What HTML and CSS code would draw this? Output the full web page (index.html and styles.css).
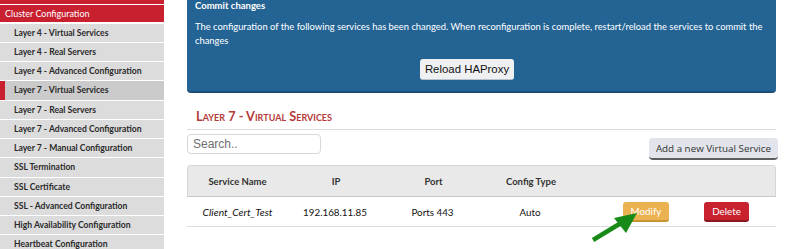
FILE: index.html
```html
<!DOCTYPE html>
<html>
<head>
<meta charset="utf-8">
<link rel="stylesheet" href="styles.css">
</head>
<body>
<div class="page">
  <nav class="sidebar">
    <div class="side-top"></div>
    <div class="side-head">Cluster Configuration</div>
    <div class="side-item">Layer 4 - Virtual Services</div>
    <div class="side-item">Layer 4 - Real Servers</div>
    <div class="side-item">Layer 4 - Advanced Configuration</div>
    <div class="side-item active">Layer 7 - Virtual Services</div>
    <div class="side-item">Layer 7 - Real Servers</div>
    <div class="side-item">Layer 7 - Advanced Configuration</div>
    <div class="side-item">Layer 7 - Manual Configuration</div>
    <div class="side-item">SSL Termination</div>
    <div class="side-item">SSL Certificate</div>
    <div class="side-item">SSL - Advanced Configuration</div>
    <div class="side-item">High Availability Configuration</div>
    <div class="side-item">Heartbeat Configuration</div>
  </nav>
  <main class="main">
    <section class="commit">
      <div class="commit-title">Commit changes</div>
      <p class="commit-text">The configuration of the following services has been changed. When reconfiguration is complete, restart/reload the services to commit the changes</p>
      <div class="commit-actions"><button class="btn-reload">Reload HAProxy</button></div>
    </section>
    <h2 class="section-title">Layer 7 - Virtual Services</h2>
    <div class="toolbar">
      <input class="search" type="text" placeholder="Search..">
      <button class="btn-add">Add a new Virtual Service</button>
    </div>
    <div class="table">
      <div class="row head">
        <div class="cell">Service Name</div>
        <div class="cell">IP</div>
        <div class="cell">Port</div>
        <div class="cell">Config Type</div>
        <div class="cell"></div>
      </div>
      <div class="row body">
        <div class="cell name">Client_Cert_Test</div>
        <div class="cell">192.168.11.85</div>
        <div class="cell">Ports 443</div>
        <div class="cell">Auto</div>
        <div class="cell actions">
          <button class="btn-modify">Modify</button>
          <button class="btn-delete">Delete</button>
        </div>
      </div>
      <svg class="arrow" width="50" height="34" viewBox="0 0 50 34">
        <line x1="2" y1="31" x2="30" y2="14" stroke="#178a17" stroke-width="4.5" stroke-linecap="butt"/>
        <polygon points="46,4 23,9 35,24" fill="#178a17"/>
      </svg>
    </div>
  </main>
</div>
</body>
</html>
```

FILE: styles.css
```css
* { box-sizing: border-box; }
html, body { margin: 0; padding: 0; background: #fff; }
body { font-family: Lato, "Open Sans", sans-serif; color: #222; width: 788px; height: 249px; overflow: hidden; }

.page { display: flex; gap: 23px; align-items: flex-start; }

.sidebar { width: 164px; flex: none; display: flex; flex-direction: column; }
.side-top { height: 3.5px; background: #c8202f; margin-bottom: 1.5px; }
.side-head { height: 17px; background: #c8202f; color: #fff; font-size: 9px; line-height: 17px; padding-left: 5px; margin-bottom: 1.5px; }
.side-item { height: 18.27px; margin-bottom: 1px; background: #dcdcdc; color: #2a2a2a; font-size: 8.6px; font-weight: 700; line-height: 18.27px; padding-left: 14px; white-space: nowrap; }
.side-item.active { background: #cbcbcb; border-left: 5px solid #c8202f; padding-left: 9px; }

.main { width: 589px; flex: none; display: flex; flex-direction: column; position: relative; }

.commit { background: #246494; color: #fff; border-radius: 0 0 4px 4px; border-bottom: 2.5px solid #1b4b79; height: 93px; padding: 0 8px; }
.commit-title { font-size: 9.5px; font-weight: 700; margin-top: 0; line-height: 12px; }
.commit-text { font-size: 9.4px; line-height: 14px; margin: 8px 0 0; }
.commit-actions { display: flex; justify-content: flex-start; margin-top: 11px; padding-left: 225px; }
.btn-reload { font-family: "Liberation Sans", Arial, sans-serif; font-size: 11.4px; color: #111; background: #eef0f2; border: 0; border-bottom: 1px solid #b7c2cc; border-radius: 3px; height: 21px; width: 94px; padding: 0; }

.section-title { font-size: 12.8px; font-variant: small-caps; color: #b53a3a; font-weight: 700; margin: 15px 0 0; padding: 0 0 5px 9px; border-bottom: 1px solid #dcdcdc; line-height: 16px; }

.toolbar { display: flex; justify-content: space-between; align-items: flex-start; margin-top: 4px; margin-right: -2px; }
.search { width: 134px; height: 20px; border: 1px solid #d8d8d8; border-radius: 4px; font-family: "Liberation Sans", Arial, sans-serif; font-size: 12px; padding: 0 5px; outline: none; }
.search::placeholder { color: #6f6f6f; }
.btn-add { margin-top: 4px; height: 22px; padding: 0 7px; background: #e1e4ea; border: 0; border-bottom: 2px solid #5d5d5d; border-radius: 4px; font-family: "Open Sans", sans-serif; font-size: 9.8px; color: #333; }

.table { margin-top: 5px; position: relative; }
.row { display: grid; grid-template-columns: 99px 98px 97px 98px 1fr; align-items: center; }
.row.head { height: 32px; background: #e9e9e9; border: 1px solid #d6d6d6; border-bottom: 1px solid #c9c9c9; border-radius: 4px 4px 0 0; font-weight: 700; font-size: 9.5px; color: #333; }
.row.body { height: 30px; border-bottom: 1px solid #dcdcdc; font-size: 9.8px; color: #111; }
.cell { text-align: center; }
.cell.name { font-style: italic; font-size: 10.3px; padding-left: 2px; }
.cell.actions { display: flex; align-items: center; padding-left: 44px; gap: 35px; text-align: left; }
.btn-modify, .btn-delete { height: 20px; border: 0; border-radius: 3px; color: #fff; font-family: Lato, sans-serif; font-size: 9.8px; padding: 0; }
.btn-modify { width: 46px; background: #ebb251; border-bottom: 2px solid #c69435; }
.btn-delete { width: 45px; background: #c8222f; border-bottom: 2px solid #8b1820; }

.arrow { position: absolute; left: 404px; top: 44px; }
```
